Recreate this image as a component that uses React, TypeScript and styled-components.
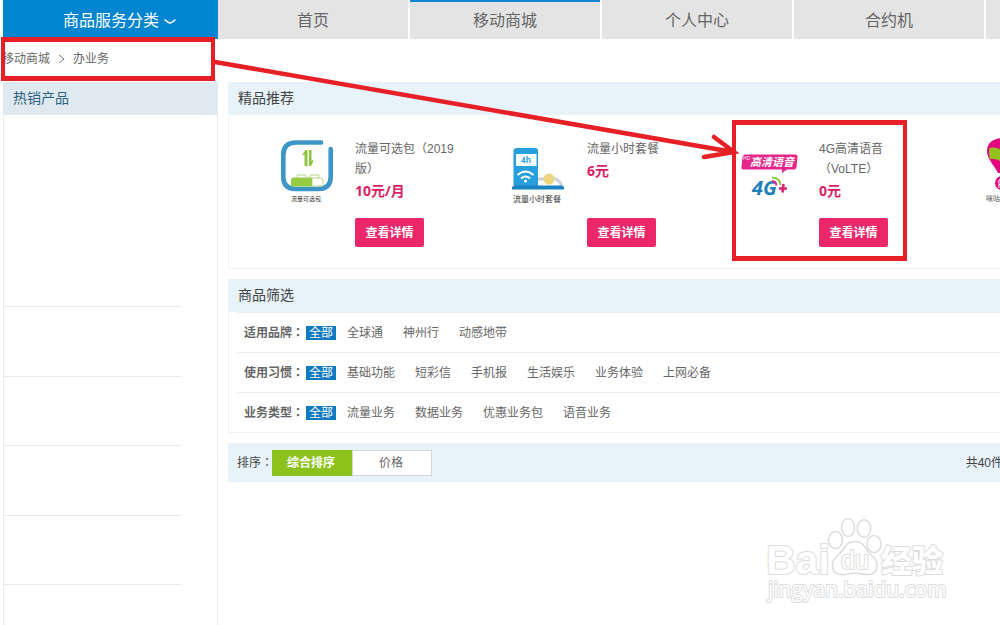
import React from 'react';
import styled, { createGlobalStyle } from 'styled-components';

const GlobalStyle = createGlobalStyle`
  *, *::before, *::after { box-sizing: border-box; }
  body {
    margin: 0;
    background: #fff;
    color: #666;
    font: 12px/20px "Liberation Sans", "Noto Sans CJK SC", sans-serif;
  }
  ul { margin: 0; padding: 0; list-style: none; }
  h2, p { margin: 0; }
  a { color: inherit; text-decoration: none; }
  button { font-family: inherit; cursor: pointer; }
`;

const Page = styled.div`
  position: relative;
  display: flex;
  flex-direction: column;
  min-height: 100vh;
  padding-left: 3px;
  overflow: hidden;
`;

const TopBar = styled.header`
  display: flex;
  height: 39px;
`;

const CategoryButton = styled.button`
  display: flex;
  flex: 0 0 215px;
  align-items: center;
  gap: 5px;
  padding: 2px 0 0 60px;
  border: 0;
  background: #0085d0;
  color: #fff;
  font-size: 16px;
  line-height: 24px;
`;

const Nav = styled.nav`
  display: flex;
  flex: 1;
  gap: 2px;
  min-width: 0;
  overflow: hidden;
`;

const NavLink = styled.a<{ $active?: boolean }>`
  flex: 0 0 190px;
  height: 39px;
  background: #e4e4e4;
  box-shadow: ${(p) => (p.$active ? 'inset 0 2px 0 #0d88d0' : 'none')};
  font-size: 16px;
  line-height: 41px;
  text-align: center;
`;

const NavFill = styled.div`
  flex: 1 0 190px;
  background: #e4e4e4;
`;

const Breadcrumb = styled.nav`
  display: flex;
  align-items: center;
  gap: 8px;
  height: 43px;
  padding-bottom: 4px;
  margin-left: -1px;
`;

const Columns = styled.div`
  display: flex;
  flex: 1;
  gap: 10px;
`;

const Sidebar = styled.aside`
  flex: 0 0 215px;
  border: solid #e6eef1;
  border-width: 0 1px;
`;

const SidebarTitle = styled.h2`
  height: 33px;
  padding-left: 10px;
  margin: 0 -1px;
  background: #e0e9f0;
  color: #2c6280;
  font-size: 14px;
  font-weight: 400;
  line-height: 33px;
`;

const SidebarSlot = styled.li`
  width: 177px;
  height: 70px;
  border-bottom: 1px solid #e4ebee;
  &:first-child { height: 192px; }
  &:nth-child(odd):not(:first-child) { height: 69px; }
`;

const Main = styled.main`
  display: flex;
  flex: 1;
  flex-direction: column;
  gap: 10px;
  min-width: 0;
`;

const Panel = styled.section`
  border: solid #eff3f6;
  border-width: 0 0 1px 1px;
`;

const PanelTitle = styled.h2`
  height: 33px;
  padding-left: 10px;
  margin-left: -1px;
  background: #e7f2f9;
  color: #444;
  font-size: 14px;
  font-weight: 400;
  line-height: 33px;
`;

const Products = styled.ul`
  display: flex;
  padding: 24px 0 21px 48px;
  overflow: hidden;
`;

const Product = styled.li`
  display: flex;
  flex: 0 0 232px;
  gap: 18px;
`;

const Picture = styled.svg`
  flex: 0 0 60px;
  height: 68px;
  overflow: visible;
  font-family: "Open Sans", "Noto Sans CJK SC", sans-serif;
`;

const Info = styled.div`
  display: flex;
  flex-direction: column;
  align-items: flex-start;
  width: 106px;
  min-height: 108px;
`;

const Price = styled.p`
  color: #dc1f63;
  font: 700 14px/24px "Open Sans", "Noto Sans CJK SC", sans-serif;
`;

const DetailButton = styled.button`
  width: 69px;
  height: 29px;
  padding: 0 0 2px;
  margin-top: auto;
  border: 0;
  border-radius: 2px;
  background: #eb2669;
  color: #fff;
  font-size: 12px;
  font-weight: 700;
`;

const FilterRow = styled.div`
  display: flex;
  align-items: center;
  height: 40px;
  padding-left: 7px;
  margin-left: 8px;
  border-top: 1px solid #eceff1;
`;

const FilterLabel = styled.span`
  width: 62px;
  font-weight: 700;
`;

/* The Traditional Chinese face centres the full-width colon in its cell. */
const Colon = styled.span`
  font-family: "Noto Sans CJK TC", sans-serif;
  line-height: 1;
`;

const Selected = styled.a`
  padding: 0 3px;
  margin-right: 11px;
  background: #0f7ac2;
  color: #fff;
  line-height: 14px;
`;

const Options = styled.div`
  display: flex;
  gap: 20px;
  white-space: nowrap;
`;

const SortBar = styled.div`
  display: flex;
  align-items: center;
  height: 39px;
  padding-left: 9px;
  background: #e7f2f9;
  color: #444;
  overflow: hidden;
`;

const SortLabel = styled.span`
  width: 35px;
  white-space: nowrap;
`;

const SortButton = styled.button<{ $active?: boolean }>`
  width: 80px;
  height: 26px;
  padding: 0 2px 2px 0;
  border: 1px solid ${(p) => (p.$active ? '#8cc21b' : '#d2d6d8')};
  background: ${(p) => (p.$active ? '#8cc21b' : '#fff')};
  color: ${(p) => (p.$active ? '#fff' : '#666')};
  font-size: 12px;
  font-weight: ${(p) => (p.$active ? 700 : 400)};
`;

const Count = styled.span`
  margin-left: auto;
  margin-right: -3px;
  white-space: nowrap;
`;

const Highlight = styled.div<{ $x: number; $y: number; $w: number; $h: number }>`
  position: absolute;
  left: ${(p) => p.$x}px;
  top: ${(p) => p.$y}px;
  width: ${(p) => p.$w}px;
  height: ${(p) => p.$h}px;
  border: solid #e71f26;
  border-width: 5px 4px;
  pointer-events: none;
`;

const Arrow = styled.svg`
  position: absolute;
  left: 213px;
  top: 50px;
  pointer-events: none;
`;

const Watermark = styled.svg`
  position: absolute;
  right: 0;
  bottom: 0;
  pointer-events: none;
`;

const DataPackPicture = () => (
  <Picture viewBox="0 0 60 68" width="60" height="68">
    <path d="M44 3.5H19Q6.300 3.500 6.300 16V38Q6.300 50 19 50H41Q53.700 50 53.700 38V10" fill="none" stroke="#3c96c8" strokeWidth="4.600" strokeLinecap="round" />
    <path d="M25 16L28.500 11H30.500V27H27.500V15.500ZM32 11H34.500V22L36 20.500V23L34 27H32Z" fill="#8cc640" />
    <path d="M20 39V37Q20 36 21 36H28Q29 36 29 37V39M32.500 39V37Q32.500 36 33.500 36H41Q42 36 42 37V39" fill="none" stroke="#b7d98b" />
    <path d="M35 39H43Q46 39 46 42V47H35Z" fill="#fff" stroke="#b7d98b" />
    <path d="M17 38.500H35V47.500H14V41.500Q14 38.500 17 38.500Z" fill="#95cb45" />
    <text x="29" y="62" fontSize="6" fill="#333" textAnchor="middle">流量可选包</text>
  </Picture>
);

const HourPackPicture = () => (
  <Picture viewBox="0 0 60 68" width="60" height="68">
    <path d="M29 40H36Q50 37 52.500 47" fill="none" stroke="#cfd3e2" strokeWidth="3" />
    <circle cx="40" cy="40" r="5.600" fill="#ecd680" />
    <path d="M4.500 12Q4.500 9 8 9H26Q29 9 29 12V48H4.500Z" fill="#279fdd" />
    <path d="M3 48L6 46.500H53L55 48V50.500H3Z" fill="#1984c2" />
    <path d="M7 15H27.500V27H7Z" fill="#fff" />
    <text x="17" y="24" fontSize="8" fontWeight="700" fill="#279fdd" textAnchor="middle">4h</text>
    <g fill="none" stroke="#fff" strokeWidth="2">
      <path d="M8.500 36Q16.500 29 24.500 36" />
      <path d="M12 39.500Q16.500 35.500 21 39.500" />
    </g>
    <circle cx="16.500" cy="42" r="1.600" fill="#fff" />
    <text x="28" y="63" fontSize="8" fill="#333" textAnchor="middle">流量小时套餐</text>
  </Picture>
);

const VoltePicture = () => (
  <Picture viewBox="0 0 60 68" width="60" height="68">
    <path d="M4 15.500H54Q57 15.500 56.500 18L55.500 28Q55 30.500 53 30.500H46L41 34V30.500H3Q0 30.500 .5 28L1.500 18Q2 15.500 4 15.500Z" fill="#e5258a" />
    <text x="2" y="21" fontSize="5" fill="#fff">HD</text>
    <text x="9" y="27" fontSize="11" fontWeight="700" fontStyle="italic" fill="#fff">高清语音</text>
    <text x="11" y="56" fontSize="20" fontWeight="700" fontStyle="italic" fill="#1b7fb8">4G</text>
    <path d="M31 38.500Q39 39 39.500 46" fill="none" stroke="#8cc63f" strokeWidth="2" />
    <path d="M31 42Q35 42.500 35.500 46.500" fill="none" stroke="#e5258a" strokeWidth="2" />
    <path d="M42.500 45L41.500 53.500M38 49.500H46" stroke="#dd2270" strokeWidth="2.600" />
  </Picture>
);

const BalloonPicture = () => (
  <Picture viewBox="0 0 60 68" width="60" height="68">
    <path d="M30 -1C20 -1 14 4 14 12C14 20 21 26 25 34H36C40 26 47 20 47 12C47 4 40 -1 30 -1Z" fill="#e3067f" />
    <path d="M16.500 9Q25 7 32 14V25Q24 19 17 20Q15.500 14 16.500 9Z" fill="#95c11f" />
    <circle cx="29" cy="44" r="7" fill="#e3067f" />
    <path d="M27 40L25 43H28M25 47L27 45M26 44V49" stroke="#fff" fill="none" />
    <text x="13" y="62" fontSize="7" fill="#555">咪咕</text>
  </Picture>
);

const products = [
  { Icon: DataPackPicture, name: '流量可选包（2019版）', price: '10元/月' },
  { Icon: HourPackPicture, name: '流量小时套餐', price: '6元' },
  { Icon: VoltePicture, name: '4G高清语音（VoLTE）', price: '0元' },
];

const filters = [
  { label: '适用品牌', options: ['全球通', '神州行', '动感地带'] },
  { label: '使用习惯', options: ['基础功能', '短彩信', '手机报', '生活娱乐', '业务体验', '上网必备'] },
  { label: '业务类型', options: ['流量业务', '数据业务', '优惠业务包', '语音业务'] },
];

export default function App() {
  return (
    <>
      <GlobalStyle />
      <Page>
        <TopBar>
          <CategoryButton type="button">
            商品服务分类
            <svg width="12" height="8" viewBox="0 0 12 8" fill="none" stroke="#fff" strokeWidth="1.500">
              <path d="M.5 2.500L4.500 5.500Q6 6.300 7.500 5.500L11.500 2.500" />
            </svg>
          </CategoryButton>
          <Nav>
            <NavLink href="#">首页</NavLink>
            <NavLink href="#" $active>移动商城</NavLink>
            <NavLink href="#">个人中心</NavLink>
            <NavLink href="#">合约机</NavLink>
            <NavFill />
          </Nav>
        </TopBar>
        <Breadcrumb>
          <a href="#">移动商城</a>
          <svg width="7" height="10" viewBox="0 0 7 10" fill="none" stroke="#777">
            <path d="M1 1L6 5L1 9" />
          </svg>
          <a href="#">办业务</a>
        </Breadcrumb>
        <Columns>
          <Sidebar>
            <SidebarTitle>热销产品</SidebarTitle>
            <ul>
              {[0, 1, 2, 3, 4].map((n) => <SidebarSlot key={n} />)}
            </ul>
          </Sidebar>
          <Main>
            <Panel>
              <PanelTitle>精品推荐</PanelTitle>
              <Products>
                {products.map(({ Icon, name, price }) => (
                  <Product key={name}>
                    <Icon />
                    <Info>
                      <a href="#">{name}</a>
                      <Price>{price}</Price>
                      <DetailButton type="button">查看详情</DetailButton>
                    </Info>
                  </Product>
                ))}
                <Product><BalloonPicture /></Product>
              </Products>
            </Panel>
            <Panel>
              <PanelTitle>商品筛选</PanelTitle>
              {filters.map((f) => (
                <FilterRow key={f.label}>
                  <FilterLabel>{f.label}<Colon>：</Colon></FilterLabel>
                  <Selected href="#">全部</Selected>
                  <Options>
                    {f.options.map((o) => <a key={o} href="#">{o}</a>)}
                  </Options>
                </FilterRow>
              ))}
            </Panel>
            <SortBar>
              <SortLabel>排序<Colon>：</Colon></SortLabel>
              <SortButton type="button" $active>综合排序</SortButton>
              <SortButton type="button">价格</SortButton>
              <Count>共40件</Count>
            </SortBar>
          </Main>
        </Columns>

        <Highlight $x={1} $y={37} $w={214} $h={44} />
        <Highlight $x={732} $y={120} $w={175} $h={141} />
        <Arrow width="526" height="115" viewBox="0 0 526 115" fill="none" stroke="#e71f26" strokeWidth="4.500" strokeLinecap="round">
          <path d="M2 12L520 102M501 87L521 102L491 107" />
        </Arrow>
        <Watermark width="250" height="125" viewBox="0 0 250 125" fill="#fff" stroke="#dcdcdc" strokeWidth="2" strokeLinejoin="round" fontFamily='"Liberation Sans", "Noto Sans CJK SC", sans-serif'>
          <g paintOrder="stroke">
            <text x="16" y="74" fontSize="41" fontWeight="700">Bai</text>
            <text x="131" y="72" fontSize="31" fontWeight="900">经验</text>
            <text x="18" y="97" fontSize="21" fontFamily='"Open Sans", sans-serif'>jingyan.baidu.com</text>
          </g>
          <g strokeWidth="1.500">
            <ellipse cx="85.500" cy="40" rx="7" ry="8.500" />
            <ellipse cx="98" cy="27.500" rx="6.500" ry="9" />
            <ellipse cx="114" cy="28.500" rx="6.800" ry="8.700" />
            <ellipse cx="124" cy="44" rx="7" ry="8.500" />
            <path d="M105 41.500C95 41.500 95 50 87 56C80 62 81 74 91 74.500C98 75 100 73 105 73C110 73 112 75 119 74.500C128 74 130 62 122 56C115 50 115 41.500 105 41.500Z" />
          </g>
          <text x="91" y="69" fontSize="25" paintOrder="stroke">du</text>
        </Watermark>
      </Page>
    </>
  );
}
